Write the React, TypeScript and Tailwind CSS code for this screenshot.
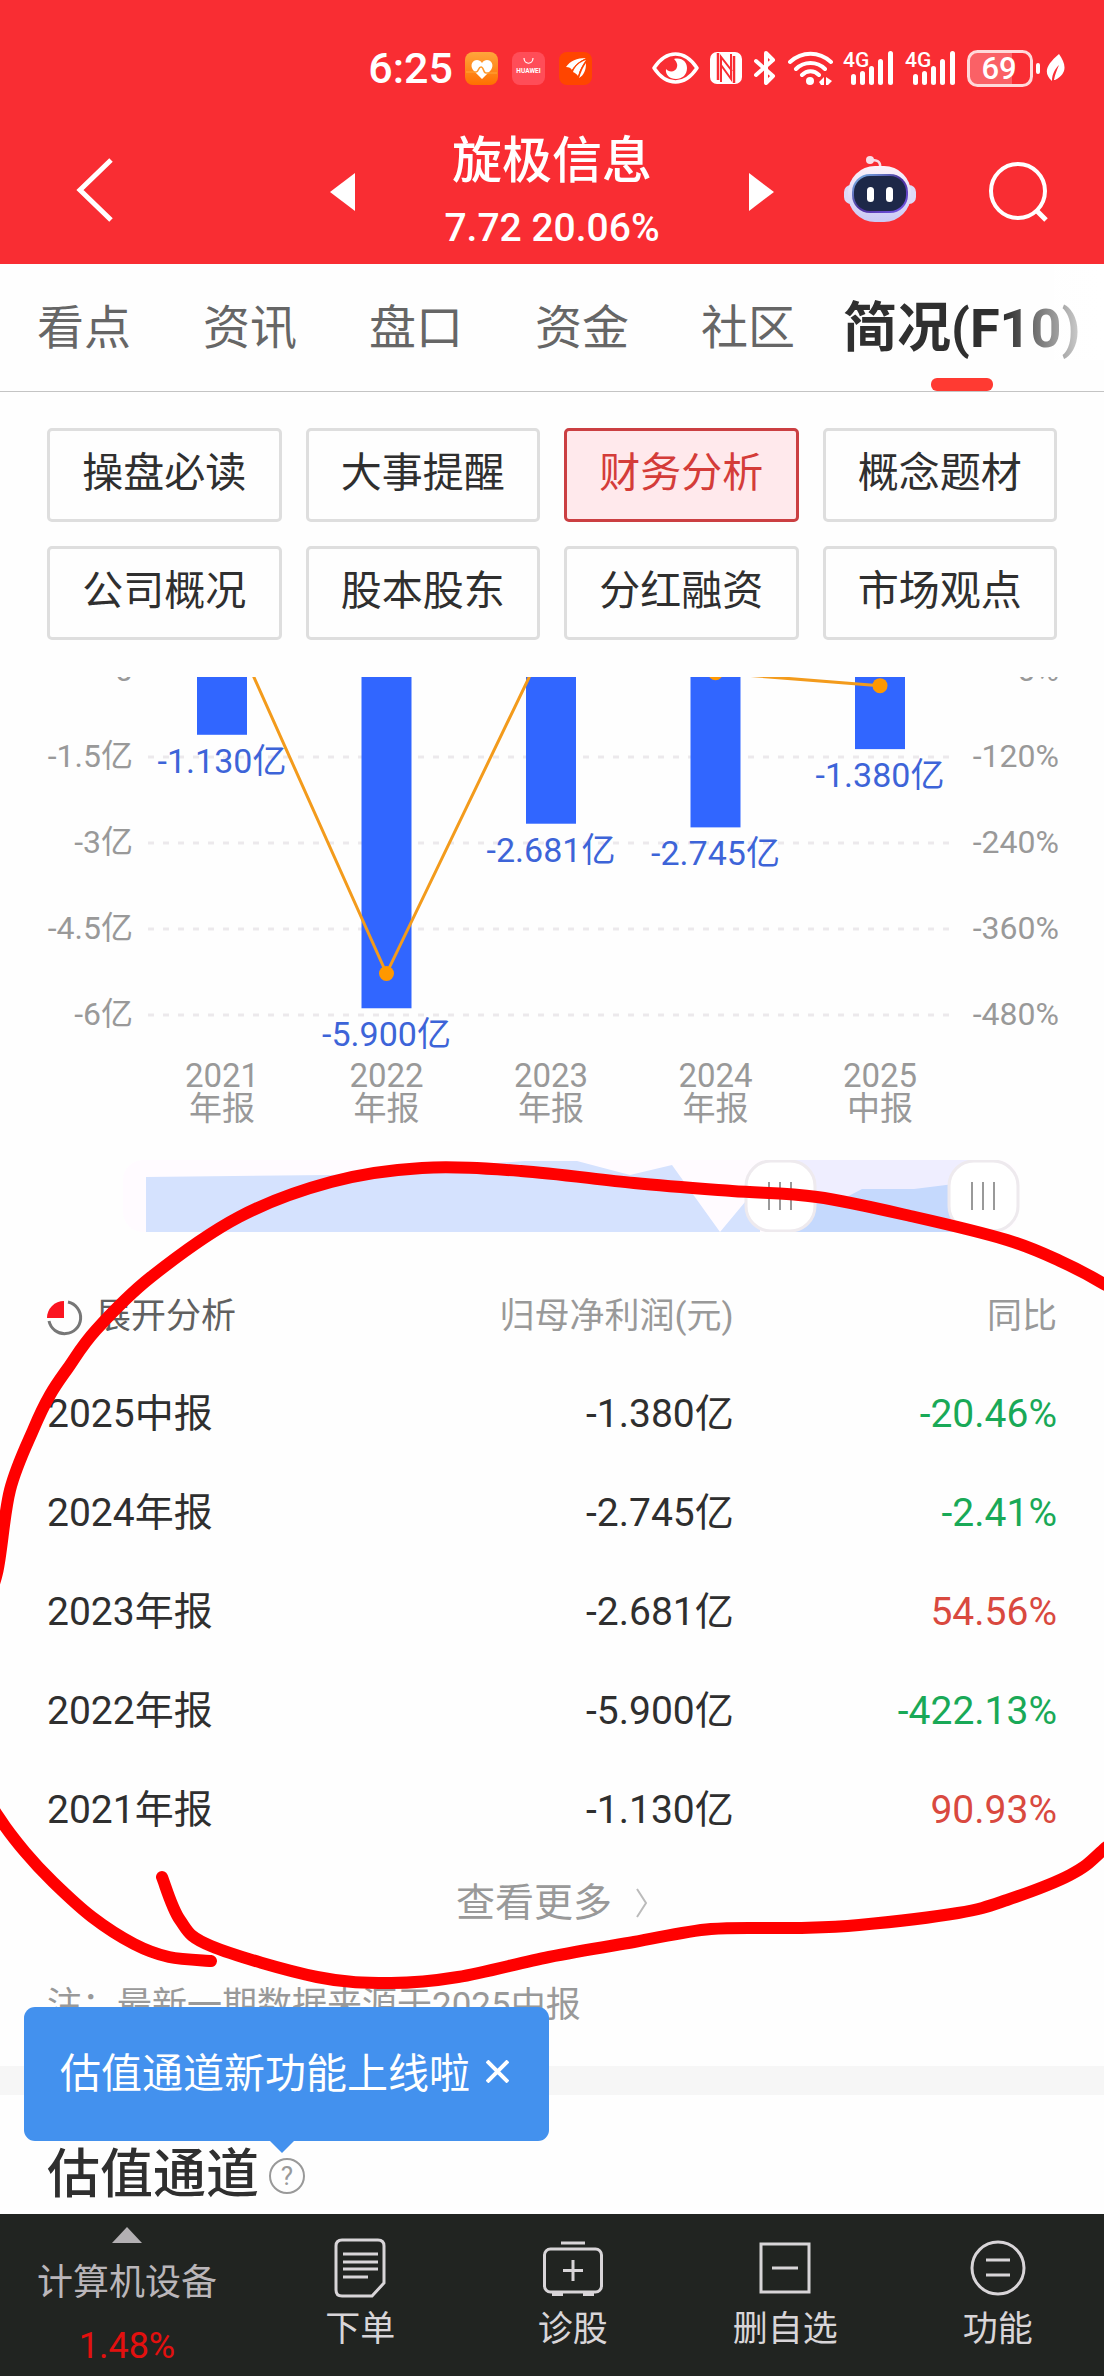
import React from "react";

type Report = { year: string; kind: string; profit: number; yoy: number };

const reports: Report[] = [
  { year: "2021", kind: "年报", profit: -1.13, yoy: 90.93 },
  { year: "2022", kind: "年报", profit: -5.9, yoy: -422.13 },
  { year: "2023", kind: "年报", profit: -2.681, yoy: 54.56 },
  { year: "2024", kind: "年报", profit: -2.745, yoy: -2.41 },
  { year: "2025", kind: "中报", profit: -1.38, yoy: -20.46 },
];

const tabs = ["看点", "资讯", "盘口", "资金", "社区"];
const sections = ["操盘必读", "大事提醒", "财务分析", "概念题材", "公司概况", "股本股东", "分红融资", "市场观点"];

/* ---------- status bar ---------- */

function SignalIcon() {
  return (
    <svg className="h-[34px] w-[51px] overflow-visible" viewBox="0 0 51 34" fill="#fff">
      <text x="0" y="16" fontSize="21" fontWeight="500" className="font-['Roboto',sans-serif]">4G</text>
      <rect x="8" y="23" width="5" height="11" rx="2.5" />
      <rect x="17" y="20" width="5" height="14" rx="2.5" />
      <rect x="26" y="15" width="5" height="19" rx="2.5" />
      <rect x="35" y="8" width="5" height="26" rx="2.5" />
      <rect x="45" y="0" width="5" height="34" rx="2.5" />
    </svg>
  );
}

function StatusBar() {
  return (
    <div className="flex h-[136px] items-center justify-end pr-[39px]">
      <span className="mr-3 text-[43px] leading-none font-medium">6:25</span>
      <div className="mr-[60px] flex gap-[14px]">
        <svg className="size-[33px]" viewBox="0 0 33 33">
          <defs>
            <linearGradient id="health" x1="0" y1="0" x2="0" y2="1">
              <stop offset="0" stopColor="#ffa53c" />
              <stop offset="1" stopColor="#ff6f00" />
            </linearGradient>
          </defs>
          <rect width="33" height="33" rx="8" fill="url(#health)" />
          <path d="M17 27 8 18c-5-7 4-14 9-7 5-7 14 0 9 7z" fill="#fff" />
          <path d="M1 20h10c3 0 2-5 5-5s2 6 5 6h11" fill="none" stroke="#ff9a2e" strokeWidth="1.6" />
        </svg>
        <svg className="size-[33px]" viewBox="0 0 33 33">
          <rect width="33" height="33" rx="8" fill="#ff4d58" />
          <path d="M12 6c0 7 9 7 9 0" fill="none" stroke="#fff" strokeWidth="1.2" />
          <text x="16.5" y="21" fontSize="6.5" fontWeight="700" textAnchor="middle" fill="#fff">HUAWEI</text>
        </svg>
        <svg className="size-[33px]" viewBox="0 0 33 33">
          <rect width="33" height="33" rx="8" fill="#ff4500" />
          <path d="M7 15C11 9 18 6 27 6 21 9 16 13 13 18 12 16 10 15 7 15z" fill="#fff" />
          <path d="M14 20C16 14 21 10 27 8c-3 4-6 9-8 16-1-2-3-3-5-4z" fill="#fff" />
          <path d="M20 26c2-6 4-11 7-15 0 7-2 12-7 15z" fill="#fff" />
          <path d="M13 18.500C16 13 21 9 27 7M19.500 25C21 18 24 13 27.500 9" stroke="#ff4500" strokeWidth="1" fill="none" />
        </svg>
      </div>
      <div className="flex items-center">
        <svg className="h-[32px] w-[47px]" viewBox="0 0 47 32">
          <path d="M2 16C8 7 15 2 23.500 2S39 7 45 16C39 25 32 30 23.500 30S8 25 2 16z" fill="none" stroke="#fff" strokeWidth="3.500" strokeLinejoin="round" />
          <path d="M22 7c8-2 13 3 13 9 0 7-5 11-11 11s-11-4-10-10c3 4 10 3 11-2 1-3-1-6-3-8z" fill="#fff" />
        </svg>
        <svg className="ml-[11px] h-[32px] w-[32px]" viewBox="0 0 32 32">
          <rect width="32" height="32" rx="7" fill="#fff" />
          <path d="M8 1v27M24 31V4" stroke="#f92d33" strokeWidth="2.500" />
          <path d="M11 30V5l11 14M21 2v25L11 13" fill="none" stroke="#f92d33" strokeWidth="2" />
        </svg>
        <svg className="ml-3 h-[34px] w-[22px]" viewBox="0 0 22 34" fill="none" stroke="#fff" strokeWidth="4" strokeLinejoin="round" strokeLinecap="round">
          <path d="m2 10 17 15-7 7V2l7 7L2 24" />
        </svg>
        <svg className="ml-3 h-[34px] w-[45px]" viewBox="0 0 45 34" fill="none" stroke="#fff" strokeWidth="4" strokeLinecap="round">
          <path d="M2 11c12-11 29-11 41 0M8 18c8-8 21-8 29 0M14 24c5-5 12-5 17 0" />
          <circle cx="22" cy="30" r="4" fill="#fff" stroke="none" />
          <path d="m31 31 5-5v8h-3zM38 26l6 4-4 4h-2z" fill="#fff" stroke="none" />
        </svg>
        <div className="ml-[10px] flex gap-[11px]">
          <SignalIcon />
          <SignalIcon />
        </div>
        <svg className="ml-[11px] h-[37px] w-[73px]" viewBox="0 0 73 37">
          <path d="M11 2h34v33H11a9 9 0 0 1-9-9V11a9 9 0 0 1 9-9z" fill="#fff" fillOpacity=".25" />
          <rect x="1.500" y="1.500" width="63" height="34" rx="9" fill="none" stroke="#ffd9da" strokeWidth="3" />
          <rect x="69" y="13" width="4" height="11" rx="2" fill="#fff" />
          <text x="32" y="29" fontSize="31" fontWeight="500" textAnchor="middle" fill="#fff" className="font-['Roboto',sans-serif]">69</text>
        </svg>
        <svg className="ml-[6px] h-[30px] w-[19px]" viewBox="0 0 19 30">
          <path d="M13 1c7 10 9 19-4 26h-1c1-6 3-10 5-15C9 16 6 21 6 28-3 20 0 12 13 1z" fill="#fff" />
        </svg>
      </div>
    </div>
  );
}

/* ---------- title bar ---------- */

function RobotIcon() {
  return (
    <svg className="h-[68px] w-[72px]" viewBox="0 0 72 68">
      <defs>
        <linearGradient id="shell" x1="0" y1="0" x2="0" y2="1">
          <stop offset="0" stopColor="#fdf3fa" />
          <stop offset="1" stopColor="#c9c9f5" />
        </linearGradient>
        <linearGradient id="visor" x1="0" y1="0" x2="1" y2="1">
          <stop offset="0" stopColor="#7fc4ee" />
          <stop offset=".5" stopColor="#4a2f9a" />
          <stop offset="1" stopColor="#7a5cf0" />
        </linearGradient>
      </defs>
      <path d="M28 5c7 0 9 3 8 9" fill="none" stroke="#f8dbe6" strokeWidth="2.500" />
      <circle cx="26" cy="5" r="4" fill="#f9dfe9" />
      <rect x="0" y="30" width="72" height="19" rx="7" fill="#ded9f7" />
      <rect x="4" y="11" width="63" height="56" rx="27" fill="url(#shell)" />
      <rect x="8" y="19" width="56" height="39" rx="18" fill="url(#visor)" />
      <rect x="10" y="21" width="52" height="35" rx="16" fill="#1d2848" />
      <rect x="23" y="32" width="7" height="15" rx="3.500" fill="#fff" />
      <rect x="42" y="32" width="7" height="15" rx="3.500" fill="#fff" />
    </svg>
  );
}

function TitleBar() {
  return (
    <div className="grid h-32 grid-cols-[1fr_444px_1fr] pb-4">
      <div className="flex items-center pb-1 pl-[76px]">
        <button aria-label="返回">
          <svg className="h-[66px] w-[38px]" viewBox="0 0 38 66" fill="none" stroke="#fff" strokeWidth="5">
            <path d="M35 3 4 33l31 30" />
          </svg>
        </button>
      </div>
      <div className="flex items-center justify-between">
        <button aria-label="上一只">
          <svg className="h-[38px] w-[25px]" viewBox="0 0 25 38"><path d="M25 0v38L0 19z" fill="#fff" /></svg>
        </button>
        <div className="text-center">
          <h1 className="text-[50px] leading-[50px] font-medium">旋极信息</h1>
          <p className="mt-[22px] text-[39px] leading-[40px] font-medium">7.72 20.06%</p>
        </div>
        <button aria-label="下一只">
          <svg className="h-[38px] w-[25px]" viewBox="0 0 25 38"><path d="M0 0v38l25-19z" fill="#fff" /></svg>
        </button>
      </div>
      <div className="flex items-center justify-between pr-[54px] pl-[70px]">
        <button aria-label="智能助手" className="pb-[6px]"><RobotIcon /></button>
        <button aria-label="搜索">
          <svg className="h-[60px] w-[62px]" viewBox="0 0 62 60" fill="none" stroke="#fff" strokeWidth="4">
            <circle cx="30" cy="29" r="27" />
            <path d="m48 48 10 10" strokeWidth="5" />
          </svg>
        </button>
      </div>
    </div>
  );
}

/* ---------- profit chart ---------- */

const ZERO_Y = -6;
const STEP_Y = 86;
const columnX = (i: number) => 222 + i * 164.5;
const profitY = (v: number) => ZERO_Y - 1 - (v / 1.5) * STEP_Y;
const yoyY = (v: number) => ZERO_Y - (v / 120) * STEP_Y;

function ProfitChart() {
  const ticks = [
    { profit: "0", yoy: "0%" },
    { profit: "-1.5亿", yoy: "-120%" },
    { profit: "-3亿", yoy: "-240%" },
    { profit: "-4.5亿", yoy: "-360%" },
    { profit: "-6亿", yoy: "-480%" },
  ];
  return (
    <svg className="mt-[37px] block w-full" viewBox="0 0 1104 453" role="img" aria-label="归母净利润与同比">
      {ticks.map((t, i) => {
        const y = ZERO_Y + i * STEP_Y;
        return (
          <g key={t.yoy} fontSize="32" fill="#999">
            <line x1="148" x2="950" y1={y} y2={y} stroke="#ece9ec" strokeWidth="3" strokeDasharray="6 9" />
            <text x="133" y={y + 10} textAnchor="end">{t.profit}</text>
            <text x="1059" y={y + 10} textAnchor="end">{t.yoy}</text>
          </g>
        );
      })}
      {reports.map((r, i) => (
        <rect key={r.year} x={columnX(i) - 25} y={ZERO_Y} width="50" height={profitY(r.profit) - ZERO_Y} fill="#3166ff" />
      ))}
      <polyline
        points={reports.map((r, i) => `${columnX(i)},${yoyY(r.yoy)}`).join(" ")}
        fill="none"
        stroke="#f39b1c"
        strokeWidth="3"
      />
      {reports.map((r, i) => (
        <g key={r.year} textAnchor="middle">
          <circle cx={columnX(i)} cy={yoyY(r.yoy)} r="7.500" fill="#ff9800" />
          <text x={columnX(i)} y={profitY(r.profit) + 38} fontSize="34" fill="#3d64d8">{r.profit.toFixed(3)}亿</text>
          <text x={columnX(i)} y="410" fontSize="33" fill="#999">{r.year}</text>
          <text x={columnX(i)} y="443" fontSize="33" fill="#999">{r.kind}</text>
        </g>
      ))}
    </svg>
  );
}

function RangeHandle({ x }: { x: number }) {
  return (
    <g>
      <rect x={x + 1} y="1" width="69" height="70" rx="25" fill="#fff" stroke="#eeeaee" strokeWidth="3" />
      <path d={`M${x + 24} 22v28M${x + 35} 22v28M${x + 46} 22v28`} stroke="#999" strokeWidth="2" />
    </g>
  );
}

function RangeSlider() {
  return (
    <div className="relative mt-[30px]">
      <svg className="block w-full" viewBox="0 0 1104 72" aria-hidden="true">
        <rect x="123" width="895" height="72" rx="20" fill="#fffbff" />
        <path d="M146 17 330 15 525 1h52l53 14 42-10 48 67 40-48v48H146z" fill="#d5e2fe" />
        <rect x="781" width="202" height="72" fill="#efeeff" />
        <path d="M781 40h60l21-11h52l40-5h29v48H781z" fill="#c5d9fd" />
        <RangeHandle x={745} />
        <RangeHandle x={948} />
      </svg>
      <input type="range" aria-label="开始报告期" defaultValue={70} className="pointer-events-none absolute inset-0 size-full opacity-0" />
      <input type="range" aria-label="结束报告期" defaultValue={100} className="pointer-events-none absolute inset-0 size-full opacity-0" />
    </div>
  );
}

/* ---------- table ---------- */

function ReportTable() {
  return (
    <table className="mt-[35px] w-full table-fixed text-[39px] text-[#2f2f2f]">
      <colgroup>
        <col className="w-[34%]" />
        <col className="w-[34%]" />
        <col />
      </colgroup>
      <thead>
        <tr className="h-[97px] text-[35px] text-[#999]">
          <th className="pt-1 text-left font-normal text-[#606060]">
            <button className="flex items-center gap-[13px]">
              <svg className="size-9" viewBox="0 0 36 36">
                <path d="M21 2a16 16 0 1 1-19 19" fill="none" stroke="#777" strokeWidth="3" />
                <path d="M17 1v17H0A17 17 0 0 1 17 1z" fill="#fb1420" />
              </svg>
              展开分析
            </button>
          </th>
          <th className="pt-1 text-right font-normal">归母净利润(元)</th>
          <th className="pt-1 text-right font-normal">同比</th>
        </tr>
      </thead>
      <tbody>
        {[...reports].reverse().map((r) => (
          <tr key={r.year} className="h-[99px]">
            <td className="pt-[2px]">{r.year}{r.kind}</td>
            <td className="pt-[2px] text-right">{r.profit.toFixed(3)}亿</td>
            <td className={r.yoy < 0 ? "pt-[2px] text-right text-[#19a957]" : "pt-[2px] text-right text-[#d9493f]"}>{r.yoy.toFixed(2)}%</td>
          </tr>
        ))}
      </tbody>
    </table>
  );
}

/* ---------- freehand marker ---------- */

type Point = [number, number];

const markerPoints: Point[] = [
  [211, 1961], [169, 1957], [134, 1944], [92, 1917], [53, 1882], [25, 1852], [0, 1819], [-12, 1794], [-40, 1700],
  [-20, 1620], [-3, 1573], [10, 1490], [34, 1428], [50, 1395], [68, 1368], [96, 1330], [151, 1277], [239, 1217],
  [331, 1182], [422, 1168], [521, 1171], [634, 1183], [732, 1191], [817, 1197], [915, 1217], [1007, 1240],
  [1060, 1261], [1104, 1284], [1150, 1315], [1190, 1500], [1160, 1790], [1104, 1849], [1070, 1875], [1007, 1900],
  [958, 1913], [859, 1925], [796, 1928], [711, 1929], [634, 1942], [549, 1957], [458, 1977], [391, 1983],
  [317, 1977], [211, 1946], [180, 1920], [162, 1877],
];

function smoothPath(p: Point[]) {
  let d = `M${p[0][0]} ${p[0][1]}`;
  for (let i = 0; i < p.length - 1; i++) {
    const a = p[Math.max(i - 1, 0)];
    const b = p[i];
    const c = p[i + 1];
    const e = p[Math.min(i + 2, p.length - 1)];
    d += `C${b[0] + (c[0] - a[0]) / 6} ${b[1] + (c[1] - a[1]) / 6} ${c[0] - (e[0] - b[0]) / 6} ${c[1] - (e[1] - b[1]) / 6} ${c[0]} ${c[1]}`;
  }
  return d;
}

function Marker() {
  return (
    <svg className="pointer-events-none absolute inset-x-0 top-0 w-full" viewBox="0 0 1104 2376" aria-hidden="true">
      <path d={smoothPath(markerPoints)} fill="none" stroke="#ff0000" strokeWidth="12" strokeLinecap="round" />
    </svg>
  );
}

/* ---------- bottom bar ---------- */

const actions = [
  {
    label: "下单",
    icon: (
      <>
        <path d="M12 2h36q6 0 6 6v37L42 58H12q-6 0-6-6V8q0-6 6-6z" />
        <path d="M13 16h35M13 24h35M13 31h35M13 39h25" />
      </>
    ),
  },
  {
    label: "诊股",
    icon: (
      <>
        <rect x="1.500" y="11" width="57" height="43" rx="6" />
        <path d="M18 5h24M30 22v21M20 32.500h20" />
        <path d="M9 56h11M40 56h11" strokeWidth="4" />
      </>
    ),
  },
  {
    label: "删自选",
    icon: (
      <>
        <rect x="6" y="6" width="48" height="48" />
        <path d="M17 30h26" />
      </>
    ),
  },
  {
    label: "功能",
    icon: (
      <>
        <circle cx="30" cy="30" r="26" />
        <path d="M18 22h24M18 37h24" />
      </>
    ),
  },
];

function BottomBar() {
  return (
    <footer className="grid h-[162px] grid-cols-[23%_1fr_1fr_1fr_1fr] bg-[#212421] text-[#d8d5d8]">
      <button className="flex flex-col items-center pt-[13px] text-[36px] text-[#bab6ba]">
        <svg className="h-4 w-[30px]" viewBox="0 0 30 16"><path d="M15 0 30 16H0z" fill="#b3b0b3" /></svg>
        <span className="mt-4 leading-[48px]">计算机设备</span>
        <span className="mt-[15px] leading-[48px] text-[#e3100f]">1.48%</span>
      </button>
      {actions.map((a) => (
        <button key={a.label} className="flex flex-col items-center pt-6 text-[35px]">
          <svg className="size-[60px] overflow-visible" viewBox="0 0 60 60" fill="none" stroke="#d8d5d8" strokeWidth="3">{a.icon}</svg>
          <span className="mt-2 leading-[48px]">{a.label}</span>
        </button>
      ))}
    </footer>
  );
}

export default function App() {
  return (
    <div className="relative overflow-hidden bg-[#fefefe] font-['Roboto','Noto_Sans_CJK_SC',sans-serif]">
      <header className="bg-[#f92d33] text-white">
        <StatusBar />
        <TitleBar />
      </header>

      <nav className="relative flex h-32 gap-[72px] overflow-hidden border-b border-[#c4c4c4] pl-[37px] text-[47px] whitespace-nowrap text-[#666]">
        {tabs.map((t) => (
          <button key={t} className="shrink-0 pt-[2px]">{t}</button>
        ))}
        <button className="relative -ml-6 shrink-0 pt-[2px] text-[54px] font-bold text-[#2f2f2f]">
          简况(F10)
          <span className="absolute bottom-0 left-1/2 h-[13px] w-[62px] -translate-x-1/2 rounded-md bg-[#ff3a32]" />
        </button>
        <div className="pointer-events-none absolute top-0 right-0 h-24 w-[100px] bg-linear-to-r from-transparent to-white" />
      </nav>

      <main>
        <div className="grid grid-cols-4 gap-6 px-[47px] pt-9">
          {sections.map((s) => (
            <button
              key={s}
              className={
                s === "财务分析"
                  ? "h-[94px] rounded-[5px] border-3 border-[#cb3f42] bg-[#ffe9ec] pb-[2px] text-[41px] text-[#d43c39]"
                  : "h-[94px] rounded-[5px] border-3 border-[#dedede] pb-[2px] text-[41px] text-[#2f2f2f]"
              }
            >
              {s}
            </button>
          ))}
        </div>

        <ProfitChart />
        <RangeSlider />

        <div className="px-[47px]">
          <ReportTable />
          <div className="flex h-[88px] items-center justify-center">
            <a href="#more" className="flex items-center gap-6 text-[39px] text-[#999]">
              查看更多
              <svg className="h-[30px] w-3" viewBox="0 0 12 30" fill="none" stroke="#bbb" strokeWidth="2"><path d="m1 1 9 14-9 14" /></svg>
            </a>
          </div>
          <p className="h-[119px] pt-[34px] text-[35px] leading-[50px] text-[#999]">注：最新一期数据来源于2025中报</p>
        </div>

        <div className="h-[29px] bg-[#f6f6f6]" />

        <section className="relative flex h-[119px] items-center gap-[10px] px-[47px] pt-[42px]">
          <h2 className="text-[53px] leading-none font-medium text-[#2f2f2f]">估值通道</h2>
          <button aria-label="说明" className="flex size-9 items-center justify-center rounded-full border-2 border-[#999] text-[26px] leading-none text-[#999]">?</button>
          <div role="tooltip" className="absolute -top-22 left-6 flex h-[134px] items-center gap-4 rounded-[11px] bg-[#4391ee] pr-10 pl-9 text-[41px] text-white">
            <span className="leading-[60px]">估值通道新功能上线啦</span>
            <button aria-label="关闭" className="pb-[6px]">
              <svg className="size-[23px]" viewBox="0 0 23 23" stroke="#fff" strokeWidth="4"><path d="m1 1 21 21M22 1 1 22" /></svg>
            </button>
            <svg className="absolute top-full left-[246px] h-3 w-6" viewBox="0 0 24 12"><path d="M0 0h24L12 12z" fill="#4391ee" /></svg>
          </div>
        </section>
      </main>

      <BottomBar />
      <Marker />
    </div>
  );
}
